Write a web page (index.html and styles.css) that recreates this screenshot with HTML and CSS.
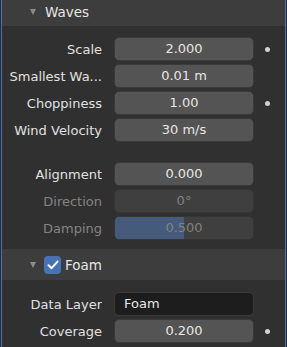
FILE: index.html
```html
<!DOCTYPE html>
<html lang="en">
<head>
  <meta charset="UTF-8" />
  <title>Ocean modifier</title>
  <link rel="stylesheet" href="styles.css">
</head>
<body>
  <div class="editor">
    <div class="panel-head head-top">
      <span class="arrow"></span>
      <span class="head-title">Waves</span>
    </div>

    <div class="panel-body">
      <div class="prop">
        <span class="label">Scale</span>
        <div class="field">2.000</div>
        <span class="dot"></span>
      </div>
      <div class="prop">
        <span class="label">Smallest Wa...</span>
        <div class="field">0.01 m</div>
        <span></span>
      </div>
      <div class="prop">
        <span class="label">Choppiness</span>
        <div class="field">1.00</div>
        <span class="dot"></span>
      </div>
      <div class="prop">
        <span class="label">Wind Velocity</span>
        <div class="field">30 m/s</div>
        <span></span>
      </div>

      <div class="prop group-start">
        <span class="label">Alignment</span>
        <div class="field">0.000</div>
        <span></span>
      </div>
      <div class="prop disabled">
        <span class="label">Direction</span>
        <div class="field">0°</div>
        <span></span>
      </div>
      <div class="prop disabled">
        <span class="label">Damping</span>
        <div class="field slider">
          <div class="fill" style="width: 50%"></div>
          <span class="value">0.500</span>
        </div>
        <span></span>
      </div>
    </div>

    <div class="panel-head">
      <span class="arrow"></span>
      <span class="check">
        <svg width="12" height="10" viewBox="0 0 12 10">
          <path d="M1.5 5.2 L4.6 8.2 L10.5 1.6" fill="none" stroke="#fff" stroke-width="2" stroke-linecap="round" stroke-linejoin="round"/>
        </svg>
      </span>
      <span class="head-title">Foam</span>
    </div>

    <div class="panel-body">
      <div class="prop">
        <span class="label">Data Layer</span>
        <div class="field text">Foam</div>
        <span></span>
      </div>
      <div class="prop">
        <span class="label">Coverage</span>
        <div class="field">0.200</div>
        <span class="dot"></span>
      </div>
    </div>
  </div>
</body>
</html>
```

FILE: styles.css
```css
html, body {
  margin: 0;
  height: 100%;
  background: #2b2b2b;
}

body {
  font-family: "DejaVu Sans", sans-serif;
  font-size: 13px;
  color: #e1e1e1;
}

.editor {
  margin-left: 1px;
  width: 283px;
  height: 347px;
  border-left: 1px solid #4772b3;
  border-right: 1px solid #4772b3;
  background: #303030;
  overflow: hidden;
}

.panel-head {
  display: flex;
  align-items: center;
  height: 31px;
  background: #3d3d3d;
  padding-left: 28px;
}

/* the top panel is scrolled a few pixels out of view */
.head-top {
  height: 26px;
  align-items: flex-start;
  padding-top: 4px;
  box-sizing: border-box;
}

.arrow {
  width: 0;
  height: 0;
  border-left: 3.5px solid transparent;
  border-right: 3.5px solid transparent;
  border-top: 6px solid #8c8c8c;
  margin-right: 9px;
}

.head-top .arrow {
  margin-top: 5px;
}

.head-title {
  font-size: 13.5px;
  color: #e6e6e6;
}

.check {
  display: flex;
  align-items: center;
  justify-content: center;
  width: 17px;
  height: 18px;
  border-radius: 4px;
  background: #4772b3;
  margin-left: -1px;
  margin-right: 4px;
}

.panel-body {
  display: flex;
  flex-direction: column;
  gap: 3px;
  padding: 11px 0 9px;
}

.panel-body + .panel-head + .panel-body {
  padding-top: 12px;
}

.prop {
  display: grid;
  grid-template-columns: 100px 140px 24px;
  column-gap: 12px;
  align-items: center;
  height: 24px;
}

.group-start {
  margin-top: 17px;
}

.label {
  text-align: right;
  white-space: nowrap;
  overflow: hidden;
}

.field {
  position: relative;
  box-sizing: border-box;
  height: 24px;
  line-height: 22px;
  text-align: center;
  background: #545454;
  border: 1px solid #3a3a3a;
  border-radius: 5px;
  color: #e6e6e6;
  overflow: hidden;
}

.field.text {
  text-align: left;
  padding-left: 9px;
  background: #1d1d1d;
}

.dot {
  width: 5px;
  height: 5px;
  border-radius: 50%;
  background: #d2d2d2;
  margin-left: -1px;
}

.disabled .label {
  color: #838383;
}

.disabled .field {
  background: #3f3f3f;
  border-color: #363636;
  color: #818181;
}

.fill {
  position: absolute;
  left: 0;
  top: 0;
  bottom: 0;
  background: #465b7c;
}

.value {
  position: relative;
}
```
